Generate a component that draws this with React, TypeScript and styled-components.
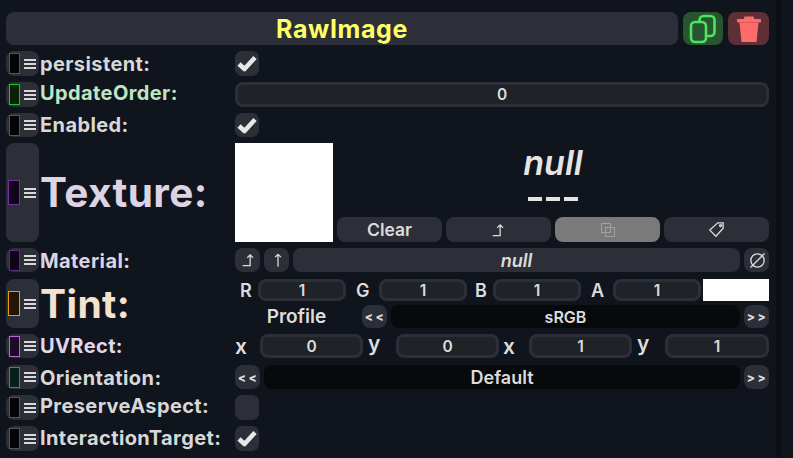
import React from "react";
import styled, { createGlobalStyle } from "styled-components";

const Global = createGlobalStyle`
  html, body { margin: 0; padding: 0; background: #10141d; overflow: hidden; }
  * { box-sizing: border-box; }
`;

const Page = styled.div`
  width: 793px; height: 458px; display: flex; background: #10141d;
  font-family: Inter, "Noto Sans", sans-serif; font-weight: 600; color: #dcdcdc;
`;
const Panel = styled.div`
  width: 776px; height: 458px; background: #10141d; padding: 12px 7px 0 6px;
  display: flex; flex-direction: column; flex: none;
`;
const Gutter = styled.div`width: 5px; height: 100%; background: #0c0f15; flex: none;`;
const Header = styled.div`display: flex; gap: 5px; height: 33px; margin-bottom: 6px;`;
const Title = styled.div`
  flex: 1; background: #2c2f37; border-radius: 8px; color: #ffff66; font-size: 25px; font-weight: 700;
  letter-spacing: .6px; display: flex; align-items: center; justify-content: center;
`;
const HeadBtn = styled.div<{ $bg: string; $w: number }>`
  width: ${p => p.$w}px; background: ${p => p.$bg}; border-radius: 8px;
  display: flex; align-items: center; justify-content: center;
`;
const Row = styled.div<{ $h: number; $mb?: number }>`
  display: flex; height: ${p => p.$h}px; margin-bottom: ${p => p.$mb ?? 6}px;
`;
const Handle = styled.div`
  width: 33px; height: 100%; background: #2c2f37; border-radius: 8px; padding-left: 2px;
  display: flex; align-items: center; gap: 4px; flex: none;
`;
const Swatch = styled.div<{ $c: string; $bg: string; $wide?: boolean }>`
  width: ${p => (p.$wide ? 12 : 11)}px; height: ${p => (p.$wide ? 25 : 21)}px;
  margin-left: ${p => (p.$wide ? 0 : 1)}px;
  border: 1px solid ${p => p.$c}; background: ${p => p.$bg};
`;
const Lines = styled.div`
  width: 12px; height: 10px; display: flex; flex-direction: column; justify-content: space-between;
  & > i { display: block; height: 2px; background: #d8d8d8; }
`;
const Label = styled.div<{ $c: string; $size: number; $up?: number; $down?: number }>`
  width: 196px; flex: none; padding-left: 1px; color: ${p => p.$c}; font-size: ${p => p.$size}px;
  letter-spacing: .4px; font-weight: 700; display: flex; align-items: center; white-space: nowrap;
  padding-bottom: ${p => (p.$up ?? 0) * 2}px; padding-top: ${p => (p.$down ?? 0) * 2}px;
`;
const Value = styled.div`flex: 1; min-width: 0; display: flex; align-items: center; gap: 4px; height: 100%;`;
const Check = styled.div`
  width: 24px; height: 100%; background: #2c2f37; border-radius: 7px;
  display: flex; align-items: center; justify-content: center;
`;
const Num = styled.div<{ $w?: number }>`
  ${p => (p.$w ? `width:${p.$w}px;flex:none;` : "flex:1;")}
  height: 100%; background: #1f2227; border: 3px solid #2c2f37; border-radius: 8px;
  font-size: 15.5px; display: flex; align-items: center; justify-content: center; color: #dcdcdc;
`;
const Stack = styled.div`flex: 1; min-width: 0; display: flex; flex-direction: column; gap: 4px; height: 100%;`;
const SubRow = styled.div<{ $h: number; $gap?: number }>`
  display: flex; align-items: center; height: ${p => p.$h}px; gap: ${p => p.$gap ?? 0}px;
`;
const UvCells = styled(SubRow)`flex: 1; min-width: 0;`;
const TextureBox = styled.div`width: 98px; height: 100%; background: #fff; flex: none;`;
const TextureSide = styled.div`flex: 1; min-width: 0; height: 100%; display: flex; flex-direction: column;`;
const NullTitle = styled.div`
  flex: 1; display: flex; flex-direction: column; align-items: center; color: #e4e4e4; font-size: 34px;
  line-height: 40px;
`;
const Dashes = styled.div`
  display: flex; gap: 4px; margin-top: 14px;
  & > i { width: 14px; height: 4px; background: #e4e4e4; display: block; }
`;
const Buttons = styled.div`display: flex; gap: 4px; height: 25px; flex: none;`;
const Btn = styled.div<{ $active?: boolean }>`
  flex: 1; background: ${p => (p.$active ? "#7a7a7a" : "#2c2f37")}; border-radius: 8px; font-size: 17.5px;
  color: #dcdcdc; display: flex; align-items: center; justify-content: center;
`;
const IconBtn = styled.div`
  width: 25px; height: 100%; flex: none; background: #2c2f37; border-radius: 8px; font-size: 12px;
  letter-spacing: 2.5px; padding-left: 2px; display: flex; align-items: center; justify-content: center;
  color: #dcdcdc; font-weight: 800;
`;
const Wide = styled.div<{ $dark?: boolean; $size?: number }>`
  flex: 1; height: 100%; border-radius: 8px; background: ${p => (p.$dark ? "#08090b" : "#2c2f37")};
  font-size: ${p => p.$size ?? 16}px; display: flex; align-items: center; justify-content: center; color: #dcdcdc;
`;
const Axis = styled.div<{ $w: number; $pad: number; $size?: number; $raise?: boolean }>`
  width: ${p => p.$w}px; flex: none; font-size: ${p => p.$size ?? 18}px; padding-left: ${p => p.$pad}px; color: #dcdcdc;
  ${p => (p.$raise ? "margin-top:-5px;" : "")}
`;
const ColorPreview = styled.div`width: 66px; height: 100%; background: #fff; flex: none; margin-left: 2px;`;
const ProfileLabel = styled.div`width: 123px; flex: none; font-size: 19px; text-align: center; color: #dcdcdc;`;

const Ham = () => <Lines><i /><i /><i /></Lines>;
const Tick = () => (
  <svg width="20" height="17" viewBox="0 0 20 17">
    <path d="M2 9 L7.5 14 L18 2.5" fill="none" stroke="#e8e8e8" strokeWidth="4.6" strokeLinejoin="round" />
  </svg>
);
const Ico = ({ d, size = 16 }: { d: string; size?: number }) => (
  <svg width={size} height={size} viewBox="0 0 14 14" fill="none" stroke="#dcdcdc" strokeWidth="1.1"><path d={d} /></svg>
);
const arrowCorner = "M1.5 12 H8 V2.5 M5.5 5 L8 2.5 L10.5 5";
const arrowUp = "M7 13 V2 M4.5 4.5 L7 2 L9.5 4.5";
const tag = "M8 1.5 H12.5 V6 L6.5 12.5 L1.5 7.5 Z M10.3 3 a.8 .8 0 1 0 .1 0";
const slashO = "M12.8 1.2 L1.2 12.8 M12.5 7 a5.5 5.5 0 1 1 -11 0 a5.5 5.5 0 1 1 11 0";

function Field({ c, bg, label, lc, size = 20, h = 25, mb, up, down, wide, children }: {
  c: string; bg: string; label: string; lc: string; size?: number; h?: number; mb?: number;
  up?: number; down?: number; wide?: boolean; children?: React.ReactNode;
}) {
  return (
    <Row $h={h} $mb={mb}>
      <Handle><Swatch $c={c} $bg={bg} $wide={wide} /><Ham /></Handle>
      <Label $c={lc} $size={size} $up={up} $down={down}>{label}</Label>
      <Value>{children}</Value>
    </Row>
  );
}

export default function App() {
  return (
    <Page>
      <Global />
      <Panel>
        <Header>
          <Title>RawImage</Title>
          <HeadBtn $bg="#27552f" $w={40}>
            <svg width="28" height="30" viewBox="0 0 28 30" fill="none" stroke="#4fe35f" strokeWidth="2.6">
              <rect x="10.5" y="2" width="15" height="20" rx="4" />
              <rect x="2" y="8" width="15" height="20" rx="4" fill="#27552f" />
            </svg>
          </HeadBtn>
          <HeadBtn $bg="#5e3036" $w={41}>
            <svg width="26" height="30" viewBox="0 0 26 30" fill="#ff6b6b">
              <rect x="1" y="5" width="24" height="3.6" rx="1" />
              <rect x="8" y="2.4" width="10" height="3" rx="1.2" />
              <path d="M3.5 8.6 H22.5 L20.5 28 H5.5 Z" />
            </svg>
          </HeadBtn>
        </Header>

        <Field c="#555" bg="#050505" label="persistent:" lc="#d8d8d8"><Check><Tick /></Check></Field>
        <Field c="#19c619" bg="#052205" label="UpdateOrder:" lc="#bfe6c3" up={2}><Num>0</Num></Field>
        <Field c="#555" bg="#050505" label="Enabled:" lc="#d8d8d8" h={24}><Check><Tick /></Check></Field>

        <Field c="#7a2fa0" bg="#10041a" label="Texture:" lc="#dcd3e3" size={40.5} h={99} wide>
          <TextureBox />
          <TextureSide>
            <NullTitle>
              <em>null</em>
              <Dashes><i /><i /><i /></Dashes>
            </NullTitle>
            <Buttons>
              <Btn>Clear</Btn>
              <Btn><Ico d={arrowCorner} /></Btn>
              <Btn $active>
                <svg width="16" height="16" viewBox="0 0 16 16" fill="none" stroke="#a0a0a0"><rect x="1.5" y="1.5" width="9" height="9" /><rect x="5.5" y="5.5" width="9" height="9" /></svg>
              </Btn>
              <Btn><Ico d={tag} size={17} /></Btn>
            </Buttons>
          </TextureSide>
        </Field>

        <Field c="#5f2a80" bg="#10041a" label="Material:" lc="#dcd3e3" h={24} mb={7} down={1}>
          <IconBtn><Ico d={arrowCorner} /></IconBtn>
          <IconBtn><Ico d={arrowUp} /></IconBtn>
          <Wide $size={18}><em>null</em></Wide>
          <IconBtn><Ico d={slashO} size={17} /></IconBtn>
        </Field>

        <Row $h={49}>
          <Handle><Swatch $c="#f09a00" $bg="#261402" $wide /><Ham /></Handle>
          <Label $c="#f5e2ce" $size={39}>Tint:</Label>
          <Stack>
            <SubRow $h={22}>
              <Axis $w={23} $pad={5}>R</Axis><Num $w={88}>1</Num>
              <Axis $w={33} $pad={10}>G</Axis><Num $w={88}>1</Num>
              <Axis $w={26} $pad={8}>B</Axis><Num $w={88}>1</Num>
              <Axis $w={32} $pad={10}>A</Axis><Num $w={88}>1</Num>
              <ColorPreview />
            </SubRow>
            <SubRow $h={23} $gap={4}>
              <ProfileLabel>Profile</ProfileLabel>
              <IconBtn>{"<<"}</IconBtn>
              <Wide $dark>sRGB</Wide>
              <IconBtn>{">>"}</IconBtn>
            </SubRow>
          </Stack>
        </Row>

        <Row $h={24} $mb={7}>
          <Handle><Swatch $c="#c060e0" $bg="#1c0a28" /><Ham /></Handle>
          <Label $c="#e2d6ef" $size={20}>UVRect:</Label>
          <UvCells $h={24}>
            <Axis $w={25} $pad={0} $size={21}>x</Axis><Num $w={103}>0</Num>
            <Axis $w={33} $pad={5} $size={21} $raise>y</Axis><Num $w={103}>0</Num>
            <Axis $w={30} $pad={4} $size={21}>x</Axis><Num $w={103}>1</Num>
            <Axis $w={33} $pad={5} $size={21} $raise>y</Axis><Num>1</Num>
          </UvCells>
        </Row>
        <Field c="#2f8f78" bg="#05201a" label="Orientation:" lc="#d8d8d8" h={24} down={1}>
          <IconBtn>{"<<"}</IconBtn>
          <Wide $dark $size={18}>Default</Wide>
          <IconBtn>{">>"}</IconBtn>
        </Field>
        <Field c="#555" bg="#050505" label="PreserveAspect:" lc="#d8d8d8" up={2}><Check /></Field>
        <Field c="#555" bg="#050505" label="InteractionTarget:" lc="#d8d8d8" up={1}><Check><Tick /></Check></Field>
      </Panel>
      <Gutter />
    </Page>
  );
}
